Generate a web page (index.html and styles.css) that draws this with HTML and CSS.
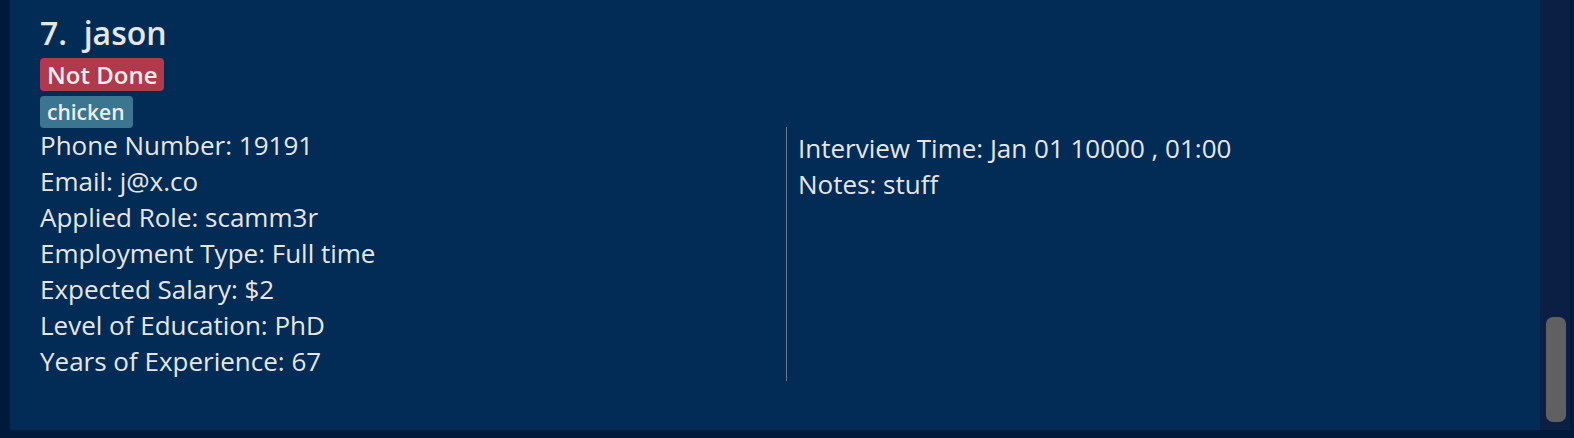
FILE: index.html
```html
<!DOCTYPE html>
<html>
<head>
<meta charset="utf-8">
<link rel="stylesheet" href="styles.css">
</head>
<body>
<div class="frame">
  <div class="card">
    <div class="name">7.&nbsp; jason</div>
    <div class="tags"><span class="tag tag-status">Not Done</span></div>
    <div class="tags"><span class="tag tag-label">chicken</span></div>
    <div class="details">
      <div class="col col-left">
        <div class="line">Phone Number: 19191</div>
        <div class="line">Email: j@x.co</div>
        <div class="line">Applied Role: scamm3r</div>
        <div class="line">Employment Type: Full time</div>
        <div class="line">Expected Salary: $2</div>
        <div class="line">Level of Education: PhD</div>
        <div class="line">Years of Experience: 67</div>
      </div>
      <div class="col col-right">
        <div class="line">Interview Time: Jan 01 10000 , 01:00</div>
        <div class="line">Notes: stuff</div>
      </div>
    </div>
  </div>
  <div class="scrollbar"><div class="thumb"></div></div>
</div>
</body>
</html>
```
FILE: styles.css
```css
html, body {
  margin: 0;
  padding: 0;
  background: #01193a;
  height: 438px;
  overflow: hidden;
}
.frame {
  display: flex;
  margin-left: 10px;
  width: 1560px;
  height: 430px;
}
.card {
  flex: 1;
  background: #022b55;
  padding: 12px 0 0 30px;
  box-sizing: border-box;
  font-family: "Open Sans", sans-serif;
  color: #e6e6e6;
}
.name {
  font-size: 32px;
  font-weight: 600;
  line-height: 42px;
}
.tags {
  display: flex;
  margin-top: 4px;
}
.tags + .tags {
  margin-top: 5px;
}
.tag {
  font-weight: 600;
  border-radius: 4px;
  color: #eeeeee;
}
.tag-status {
  background: #b03a4b;
  font-size: 24px;
  line-height: 33px;
  padding: 0 7px 0 7px;
}
.tag-label {
  background: #3b7590;
  font-size: 21px;
  line-height: 32px;
  padding: 0 8px 0 7px;
}
.details {
  display: flex;
  margin-top: -1px;
}
.col-left {
  width: 746px;
  border-right: 1px solid #6b7788;
  padding-bottom: 2px;
}
.col-right {
  padding-left: 11px;
  padding-top: 3px;
}
.line {
  font-size: 26px;
  line-height: 36px;
}
.scrollbar {
  width: 30px;
  background: #0b1f45;
  position: relative;
}
.thumb {
  position: absolute;
  left: 6px;
  top: 317px;
  width: 20px;
  height: 105px;
  border-radius: 7px;
  background: #606060;
}
```
